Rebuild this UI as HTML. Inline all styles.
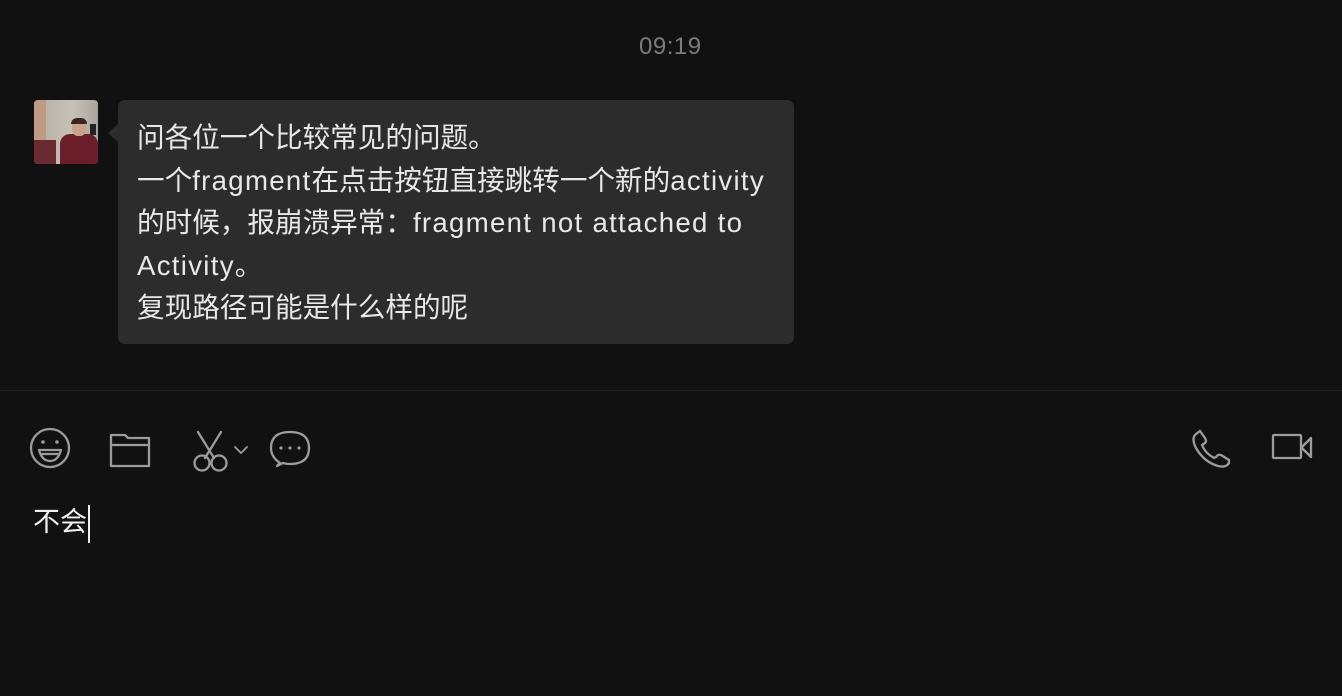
<!DOCTYPE html>
<html><head><meta charset="utf-8"><style>
html,body{margin:0;padding:0;background:#111111;width:1342px;height:696px;overflow:hidden;font-family:"Liberation Sans","Noto Sans CJK SC",sans-serif;}
.time{position:absolute;left:639px;top:33px;color:#7c7c7c;font-size:24px;letter-spacing:0.5px;}
.avatar{position:absolute;left:34px;top:100px;width:64px;height:64px;border-radius:4px;overflow:hidden;background:linear-gradient(90deg,#b7a08c 0%,#7a3a3a 8%,#b9b4a8 15%,#c6c2b8 60%,#a9a59c 100%);}
.bubble{position:absolute;left:118px;top:100px;width:676px;height:244px;background:#2c2c2c;border-radius:7px;}
.tail{position:absolute;left:108px;top:124px;width:0;height:0;border-top:9px solid transparent;border-bottom:9px solid transparent;border-right:10px solid #2c2c2c;}
.msg{position:absolute;left:137px;top:117px;color:#e8e8e8;font-size:27.6px;line-height:42.5px;white-space:pre;}
.l{letter-spacing:1.3px;}
.div{position:absolute;left:0;top:390px;width:1342px;height:1px;background:#1f1f1f;}
svg{position:absolute;}
.input{position:absolute;left:33px;top:502px;color:#f0f0f0;font-size:27px;line-height:40px;}
.caret{display:inline-block;width:2px;height:38px;background:#f0f0f0;vertical-align:-12px;margin-left:1px;}
</style></head><body>
<div class="time">09:19</div>
<div class="avatar">
<div style="position:absolute;left:0;top:0;width:12px;height:64px;background:#c09a82"></div>
<div style="position:absolute;left:26px;top:34px;width:38px;height:30px;background:#6b1d2a;border-radius:10px 10px 0 0"></div>
<div style="position:absolute;left:38px;top:20px;width:14px;height:16px;background:#c9a488;border-radius:6px"></div>
<div style="position:absolute;left:37px;top:18px;width:16px;height:6px;background:#3a2522;border-radius:6px 6px 0 0"></div>
<div style="position:absolute;left:56px;top:24px;width:6px;height:11px;background:#222"></div>
<div style="position:absolute;left:0;top:40px;width:22px;height:24px;background:#6a2a30"></div>
</div>
<div class="tail"></div>
<div class="bubble"></div>
<div class="msg">问各位一个比较常见的问题。
一个<span class="l">fragment</span>在点击按钮直接跳转一个新的<span class="l">activity</span>
的时候，报崩溃异常：<span class="l">fragment not attached to</span>
<span class="l">Activity</span>。
复现路径可能是什么样的呢</div>
<div class="div"></div>
<svg width="1342" height="80" style="left:0;top:410px" fill="none" stroke="#9c9c9c" stroke-width="2.3" stroke-linecap="round" stroke-linejoin="round">
<circle cx="50" cy="38" r="19"/>
<circle cx="43" cy="32" r="1.8" fill="#9c9c9c" stroke="none"/>
<circle cx="57" cy="32" r="1.8" fill="#9c9c9c" stroke="none"/>
<path d="M39 40 H61 Q58 51 50 51 Q42 51 39 40 Z"/>
<path d="M42 44 H58"/>
<path d="M111 56 V25 H125 L128 28 H149 V56 Z M111 35 H149"/>
<path d="M198 22 L214 48 M221 22 L205 48"/>
<circle cx="202" cy="53" r="7.5"/><circle cx="219" cy="53" r="7.5"/>
<path d="M235 37 L241 43 L247 37" stroke-width="1.8"/>
<path d="M280 53 Q271 47 271 38 Q271 22 290 22 Q309 22 309 38 Q309 54 290 54 Q286 54 283 53 L277 56 Z"/>
<circle cx="281" cy="38" r="1.6" fill="#9c9c9c" stroke="none"/>
<circle cx="290" cy="38" r="1.6" fill="#9c9c9c" stroke="none"/>
<circle cx="299" cy="38" r="1.6" fill="#9c9c9c" stroke="none"/>
<path d="M1200 21 L1196 24 Q1191 28 1196 38 Q1204 52 1218 56 Q1226 58 1229 53 L1229 50 L1221 45 Q1218 44 1216 47 L1214 48 Q1205 43 1202 35 L1205 33 Q1207 31 1205 28 Z"/>
<rect x="1273" y="25" width="28" height="23" rx="1"/>
<path d="M1302 37 L1311 28 V47 L1302 38"/>
</svg>
<div class="input">不会<span class="caret"></span></div>
</body></html>
